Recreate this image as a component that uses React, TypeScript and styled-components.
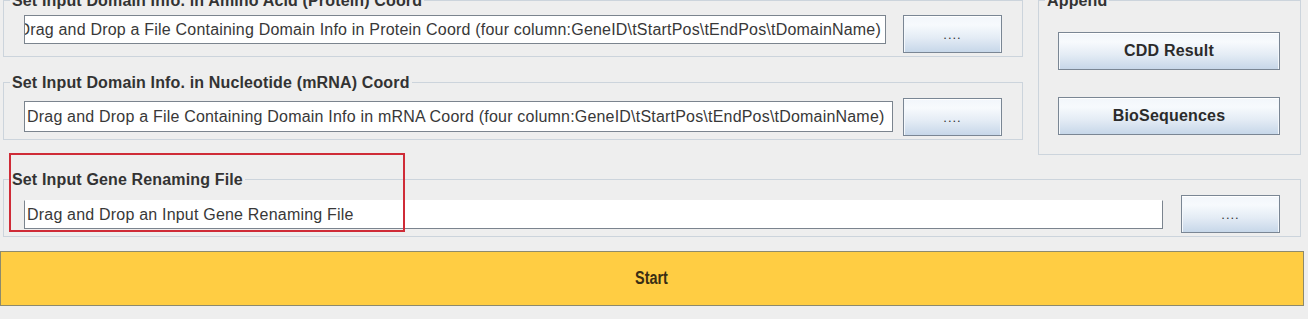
import * as React from 'react';
import styled, { createGlobalStyle } from 'styled-components';

const GlobalStyle = createGlobalStyle`
  html, body {
    margin: 0;
    padding: 0;
    background: #eeeeee;
  }
  body {
    font-family: "Liberation Sans", Arial, sans-serif;
  }
`;

const Window = styled.div`
  position: relative;
  width: 1308px;
  height: 319px;
  overflow: hidden;
  background: #eeeeee;
  color: #333333;
`;

const Content = styled.div`
  margin-top: -8px;
  padding: 0 7px 0 3px;
`;

const TopGrid = styled.div`
  display: grid;
  grid-template-columns: 1020px 263px;
  column-gap: 15px;
  align-items: start;
`;

const LeftColumn = styled.div`
  display: flex;
  flex-direction: column;
  gap: 17px;
`;

const Panel = styled.fieldset<{ $top: number; $bottom: number; $mt?: number }>`
  margin: ${(p) => p.$mt ?? 0}px 0 0 0;
  padding: ${(p) => p.$top}px 0 ${(p) => p.$bottom}px 0;
  min-width: 0;
  border: 1px solid #ccd4dc;
`;

const Legend = styled.legend`
  margin-left: 6px;
  padding: 0 2px;
  font-weight: bold;
  font-size: 16px;
  letter-spacing: 0.15px;
  line-height: 17px;
  color: #333333;
`;

const Row = styled.div`
  display: flex;
  justify-content: space-between;
  align-items: flex-start;
  padding: 0 20px;
`;

const Field = styled.div<{ $width: number; $offset: number; $height: number; $noTop?: boolean; $scrolled?: boolean }>`
  box-sizing: border-box;
  width: ${(p) => p.$width}px;
  height: ${(p) => p.$height}px;
  margin-top: ${(p) => p.$offset}px;
  display: flex;
  align-items: center;
  justify-content: ${(p) => (p.$scrolled ? 'flex-end' : 'flex-start')};
  overflow: hidden;
  white-space: nowrap;
  background: #ffffff;
  border: 1px solid #7b848e;
  border-top-color: ${(p) => (p.$noTop ? '#ffffff' : '#7b848e')};
  padding: 0 4px 0 2px;
  font-size: 16px;
  letter-spacing: 0.2px;
  color: #383838;
`;

const Button = styled.button<{ $width?: string }>`
  box-sizing: border-box;
  width: ${(p) => p.$width ?? '99px'};
  height: 38px;
  margin: 0;
  padding: 0;
  flex-shrink: 0;
  border: 1px solid #7a8694;
  box-shadow: inset 0 1px 0 #ffffff, inset 1px 0 0 #f4f8fc, inset -1px 0 0 #f4f8fc;
  background: linear-gradient(#f2f6fb 0%, #f7fafd 25%, #e4ecf5 60%, #c7d7e9 100%);
  font-family: "Liberation Sans", Arial, sans-serif;
  font-size: 16px;
  font-weight: bold;
  letter-spacing: 0.2px;
  color: #2b2b2b;
  cursor: pointer;
`;

const Dots = styled.span`
  font-weight: normal;
  font-size: 13px;
  letter-spacing: 1px;
  color: #333333;
`;

const AppendStack = styled.div`
  display: flex;
  flex-direction: column;
  gap: 27px;
  padding: 0 20px 0 19px;
`;

const StartButton = styled.button`
  box-sizing: border-box;
  display: block;
  width: 1304px;
  height: 55px;
  margin: 14px 0 0 -3px;
  padding: 0;
  border: 1px solid #8d8a6c;
  background: #ffcd43;
  font-family: "Liberation Sans Narrow", "Arial Narrow", "Liberation Sans", Arial, sans-serif;
  font-size: 18px;
  font-weight: bold;
  color: #3a2e14;
  cursor: pointer;
`;

const StartLabel = styled.span`
  display: inline-block;
  transform: scaleX(0.8);
`;

const Highlight = styled.div`
  position: absolute;
  left: 9px;
  top: 153px;
  width: 396px;
  height: 79px;
  box-sizing: border-box;
  border: 2px solid #cf2b37;
  pointer-events: none;
`;

const proteinText =
  'Drag and Drop a File Containing Domain Info in Protein Coord (four column:GeneID\\tStartPos\\tEndPos\\tDomainName)';
const mrnaText =
  'Drag and Drop a File Containing Domain Info in mRNA Coord (four column:GeneID\\tStartPos\\tEndPos\\tDomainName)';

const App: React.FC = () => {
  return (
    <>
      <GlobalStyle />
      <Window>
        <Content>
          <TopGrid>
            <LeftColumn>
              <Panel $top={6} $bottom={3}>
                <Legend>Set Input Domain Info. in Amino Acid (Protein) Coord</Legend>
                <Row>
                  <Field $width={862} $height={29} $offset={0} $scrolled>
                    {proteinText}
                  </Field>
                  <Button><Dots>....</Dots></Button>
                </Row>
              </Panel>
              <Panel $top={7} $bottom={3}>
                <Legend>Set Input Domain Info. in Nucleotide (mRNA) Coord</Legend>
                <Row>
                  <Field $width={869} $height={31} $offset={3}>
                    {mrnaText}
                  </Field>
                  <Button><Dots>....</Dots></Button>
                </Row>
              </Panel>
            </LeftColumn>
            <Panel $top={23} $bottom={19}>
              <Legend>Append</Legend>
              <AppendStack>
                <Button $width="100%">CDD Result</Button>
                <Button $width="100%">BioSequences</Button>
              </AppendStack>
            </Panel>
          </TopGrid>
          <Panel $top={7} $bottom={3} $mt={16}>
            <Legend>Set Input Gene Renaming File</Legend>
            <Row>
              <Field $width={1139} $height={29} $offset={5} $noTop>
                Drag and Drop an Input Gene Renaming File
              </Field>
              <Button><Dots>....</Dots></Button>
            </Row>
          </Panel>
          <StartButton>
            <StartLabel>Start</StartLabel>
          </StartButton>
        </Content>
        <Highlight />
      </Window>
    </>
  );
};

export default App;
